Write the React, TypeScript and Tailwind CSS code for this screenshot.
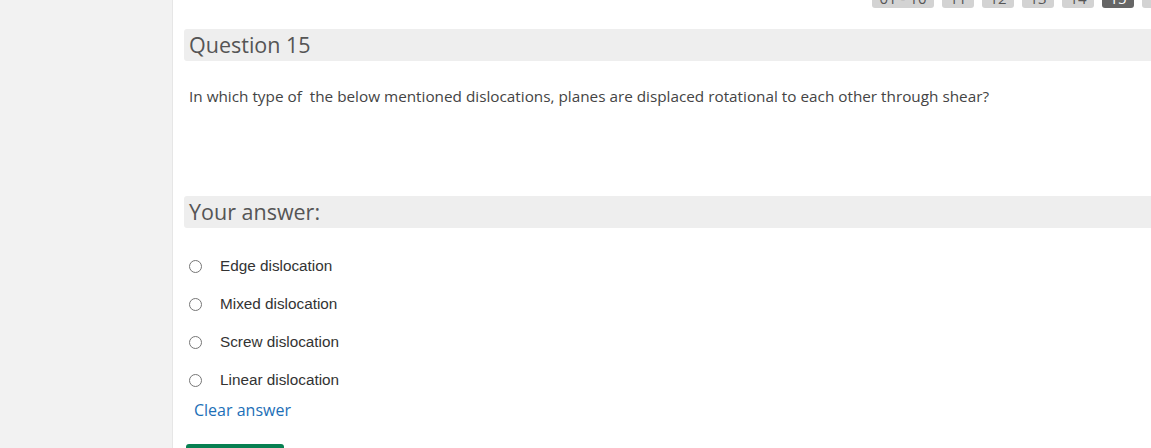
import React from 'react';

const options = ['Edge dislocation', 'Mixed dislocation', 'Screw dislocation', 'Linear dislocation'];

const navItems = [
  { label: '01 - 10', w: 'w-[62px]', dark: false },
  { label: '11', w: 'w-[32px]', dark: false },
  { label: '12', w: 'w-[32px]', dark: false },
  { label: '13', w: 'w-[32px]', dark: false },
  { label: '14', w: 'w-[32px]', dark: false },
  { label: '15', w: 'w-[32px]', dark: true },
  { label: '16', w: 'w-[32px]', dark: false },
];

export default function App() {
  return (
    <div className="flex w-[1151px] h-[448px] overflow-hidden bg-white" style={{ fontFamily: '"Open Sans", sans-serif' }}>
      <div className="w-[173px] shrink-0 bg-[#f2f2f2] border-r border-[#e6e6e6]" />
      <div className="flex-1 relative">
        <div className="flex gap-[8px] ml-[699px] mt-[-12px] h-[20px]">
          {navItems.map((n) => (
            <div
              key={n.label}
              className={`${n.w} shrink-0 h-[20px] rounded-[3px] flex items-start justify-center pt-[1px] text-[15px] leading-[18px] ${n.dark ? 'bg-[#666666] text-white' : 'bg-[#d3d3d3] text-[#555]'}`}
            >
              {n.label}
            </div>
          ))}
        </div>
        <div className="pl-[11px] mt-[21px]">
          <div className="h-[32px] bg-[#eeeeee] rounded-l-[3px] flex items-center pl-[5px]">
            <h2 className="text-[21.5px] text-[#555555] leading-none">Question 15</h2>
          </div>
          <p className="mt-[25px] ml-[5px] text-[15.3px] text-[#444444] leading-[20px] whitespace-pre">
            In which type of  the below mentioned dislocations, planes are displaced rotational to each other through shear?
          </p>
          <div className="mt-[90px] h-[32px] bg-[#eeeeee] rounded-l-[3px] flex items-center pl-[5px]">
            <h3 className="text-[21.5px] text-[#555555] leading-none">Your answer:</h3>
          </div>
          <div className="mt-[28px] ml-[5px] flex flex-col gap-[18px]" style={{ fontFamily: '"Liberation Sans", Arial, sans-serif' }}>
            {options.map((o) => (
              <label key={o} className="flex items-center h-[20px] text-[15.3px] text-[#333333]">
                <span className="w-[13px] h-[13px] rounded-full border border-[#767676] bg-white shrink-0" />
                <span className="ml-[18px]">{o}</span>
              </label>
            ))}
          </div>
          <div className="mt-[9px] ml-[10px] text-[16px] text-[#1c6fb7] leading-[22px]">Clear answer</div>
          <div className="mt-[23px] ml-[2px] w-[98px] h-[30px] bg-[#078052] rounded-[3px]" />
        </div>
      </div>
    </div>
  );
}
